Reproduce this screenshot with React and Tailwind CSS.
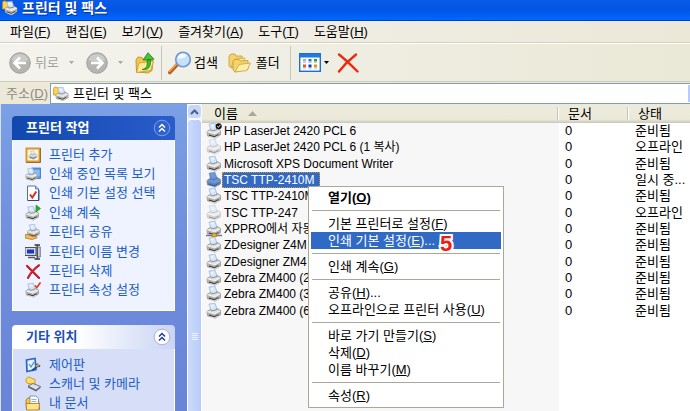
import React, { useState } from 'react';

const menus = [
  ['파일', 'F'],
  ['편집', 'E'],
  ['보기', 'V'],
  ['즐겨찾기', 'A'],
  ['도구', 'T'],
  ['도움말', 'H'],
];

const tasks = [
  { icon: 'add', label: '프린터 추가' },
  { icon: 'queue', label: '인쇄 중인 목록 보기' },
  { icon: 'prefs', label: '인쇄 기본 설정 선택' },
  { icon: 'resume', label: '인쇄 계속' },
  { icon: 'share', label: '프린터 공유' },
  { icon: 'rename', label: '프린터 이름 변경' },
  { icon: 'delete', label: '프린터 삭제' },
  { icon: 'props', label: '프린터 속성 설정' },
];

const places = [
  { icon: 'control', label: '제어판' },
  { icon: 'scanner', label: '스캐너 및 카메라' },
  { icon: 'docs', label: '내 문서' },
];

const printers = [
  { name: 'HP LaserJet 2420 PCL 6', status: '준비됨', kind: 'default' },
  { name: 'HP LaserJet 2420 PCL 6 (1 복사)', status: '오프라인', kind: 'offline' },
  { name: 'Microsoft XPS Document Writer', status: '준비됨' },
  { name: 'TSC TTP-2410M', status: '일시 중...', kind: 'selected' },
  { name: 'TSC TTP-2410M', status: '준비됨' },
  { name: 'TSC TTP-247', status: '오프라인', kind: 'offline' },
  { name: 'XPPRO에서 자동', status: '준비됨', kind: 'network' },
  { name: 'ZDesigner Z4M', status: '준비됨' },
  { name: 'ZDesigner ZM4', status: '준비됨' },
  { name: 'Zebra ZM400 (2', status: '준비됨' },
  { name: 'Zebra ZM400 (3', status: '준비됨' },
  { name: 'Zebra ZM400 (6', status: '준비됨' },
];

const contextMenu = [
  [{ label: '열기', hotkey: 'O', bold: true }],
  [
    { label: '기본 프린터로 설정', hotkey: 'F' },
    { label: '인쇄 기본 설정', hotkey: 'E', more: true, step: 5 },
  ],
  [{ label: '인쇄 계속', hotkey: 'G' }],
  [
    { label: '공유', hotkey: 'H', more: true },
    { label: '오프라인으로 프린터 사용', hotkey: 'U' },
  ],
  [
    { label: '바로 가기 만들기', hotkey: 'S' },
    { label: '삭제', hotkey: 'D' },
    { label: '이름 바꾸기', hotkey: 'M' },
  ],
  [{ label: '속성', hotkey: 'R' }],
];

function PrinterShape() {
  return (
    <>
      <path d="M3 1l6-.8 2.2 6.300L5 8z" fill="#cfe3fb" stroke="#8fa9cf" strokeWidth=".6" />
      <path d="M4.500 2.500l3.500-.5M5 4.200l3.500-.5" stroke="#fff" strokeWidth=".8" />
      <path d="M1 8.500L4.500 6.300l1 1.700 5-1L11 5.500l3.500 2v4.300L9 15.200 1.500 12.800z" fill="#e4e4e0" stroke="#77777a" strokeWidth=".7" />
      <path d="M1.200 8.700l7.600 2.200L14.300 8v3.700L9 15 1.600 12.700z" fill="#b1b1b0" />
      <path d="M1.200 8.700l7.600 2.200L14.300 8" fill="none" stroke="#fafafa" strokeWidth=".8" />
      <path d="M3 12.100l5.500 1.600 4-2.200" fill="none" stroke="#3f3f42" strokeWidth="1.100" />
      <path d="M3.500 13.500l5 1.500 3.500-2" fill="none" stroke="#f4f4f4" strokeWidth=".7" />
    </>
  );
}

function PrinterIcon({ kind }) {
  return (
    <svg viewBox="0 0 16 16" className="h-4 w-4 shrink-0" aria-hidden="true">
      <g opacity={kind === 'offline' ? 0.5 : 1}>
        <PrinterShape />
      </g>
      {kind === 'selected' && (
        <path d="M3 1l6-.8L11 5.500l3.500 2v4.300L9 15.200 1.500 12.800 1 8.500l3-2.200z" fill="#316ac5" opacity=".65" />
      )}
      {kind === 'default' && (
        <>
          <circle cx="12.700" cy="3.200" r="3" fill="#111" />
          <path d="M11.200 3.200l1.200 1.200 2-2.600" fill="none" stroke="#fff" strokeWidth=".9" />
        </>
      )}
      {kind === 'network' && (
        <>
          <path d="M0 14.500h16" stroke="#777" strokeWidth="1.500" />
          <rect x="6" y="12.800" width="4.500" height="3" fill="#f0a81e" stroke="#a06a08" strokeWidth=".5" />
        </>
      )}
    </svg>
  );
}

function FolderPrinterIcon() {
  return (
    <svg viewBox="0 0 16 16" className="h-4 w-4 shrink-0" aria-hidden="true">
      <path d="M.5 2.500l1-1.500h2l1 1H7v7H.500z" fill="#ffd34d" stroke="#c98a12" strokeWidth=".7" />
      <g transform="translate(2 1) scale(.9)">
        <PrinterShape />
      </g>
    </svg>
  );
}

function SideIcon({ name }) {
  return (
    <svg viewBox="0 0 16 16" className="h-4 w-4 shrink-0" aria-hidden="true">
      {name === 'add' && (
        <>
          <rect x="1.500" y="1.500" width="13" height="13" fill="#fff7dc" stroke="#d9992a" strokeWidth="2" />
          <path d="M15.500 1v14.500H1" fill="none" stroke="#7d5a18" strokeWidth=".8" />
          <g transform="translate(3.500 3.500) scale(.58)"><PrinterShape /></g>
        </>
      )}
      {name === 'queue' && (
        <>
          <rect x="7" y="2" width="8.500" height="10.500" fill="#5ba0ee" stroke="#2f63b4" strokeWidth=".7" />
          <path d="M8 5h6.500M8 7h6.500M8 9h6.500" stroke="#d8ebff" strokeWidth=".8" />
          <g transform="translate(0 2) scale(.85)"><PrinterShape /></g>
        </>
      )}
      {name === 'prefs' && (
        <>
          <path d="M2.500 1h8l3 3v11.500h-11z" fill="#fff" stroke="#4a72b5" />
          <path d="M10.500 1v3h3" fill="#9fc0ef" stroke="#4a72b5" strokeWidth=".8" />
          <path d="M5 9.500l2.300 3 4-6" fill="none" stroke="#e02a1c" strokeWidth="2" />
          <path d="M3 15.500h11V5" fill="none" stroke="#26447c" strokeWidth=".9" />
        </>
      )}
      {name === 'resume' && (
        <>
          <g transform="translate(0 1) scale(.93)"><PrinterShape /></g>
          <path d="M11 0l4.500 3.500L11 7z" fill="#2fae2c" stroke="#14751a" strokeWidth=".6" />
        </>
      )}
      {name === 'share' && (
        <>
          <g transform="translate(1.500 0) scale(.88)"><PrinterShape /></g>
          <path d="M0 10.500l3.500.3 4 1.700 4-.2.5 1.500-5 1.700L0 14z" fill="#f5bd54" stroke="#a8691b" strokeWidth=".7" />
        </>
      )}
      {name === 'rename' && (
        <>
          <rect x="0" y="3.500" width="11" height="8" fill="#d7d9e2" stroke="#4c5060" />
          <rect x="2" y="5.500" width="7" height="4" fill="#1838c0" />
          <path d="M3 13.500h7" stroke="#555" strokeWidth="1.500" />
          <path d="M9.500 1h5.500M12.200 1v13.500M9.500 15h5.500" stroke="#333846" strokeWidth="1.300" />
          <path d="M13 3h2.300v10H13" fill="#c6c9d4" stroke="#4c5060" strokeWidth=".7" />
        </>
      )}
      {name === 'delete' && (
        <>
          <path d="M2 3l12 12M14 2.500C9 6 6 9.500 3 15" fill="none" stroke="#7b1020" strokeWidth="1.800" strokeLinecap="round" />
          <path d="M2 2.500l12 12M14 2C9 5.500 6 9 3 14.500" fill="none" stroke="#dc202a" strokeWidth="1.600" strokeLinecap="round" />
        </>
      )}
      {name === 'props' && (
        <>
          <g transform="translate(0 1) scale(.93)"><PrinterShape /></g>
          <path d="M10 3.500l1.800 2L15.500.500" fill="none" stroke="#e3371e" strokeWidth="1.700" />
        </>
      )}
      {name === 'control' && (
        <>
          <path d="M1.500 3l8.500-1.500 1 11-9 2z" fill="#eaf3ff" stroke="#2c66c0" strokeWidth="1.700" />
          <path d="M4 7l2 3 3-5" fill="none" stroke="#4c86d8" strokeWidth="1.200" />
          <path d="M7 13.500l7-5.500M11.500 7l3.500 2.500" stroke="#1e4e9c" strokeWidth="1.800" />
          <path d="M11 9.500l3-2" stroke="#f0a330" strokeWidth="1.800" />
        </>
      )}
      {name === 'scanner' && (
        <>
          <path d="M1 3l2-2 2.500.5L7 2.500l3 1v5L3 7.500 1 6z" fill="#ffdb68" stroke="#bd8a20" strokeWidth=".8" />
          <path d="M3 10l5-2.500 7.500 3-4.500 3.500z" fill="#dfe2ea" stroke="#545a68" strokeWidth=".8" />
          <path d="M3 10v1.500L11 15.500l4.500-3.500v-1.500L11 14z" fill="#606775" />
        </>
      )}
      {name === 'docs' && (
        <>
          <path d="M1 5l2-2h3l1 2h6.500l1 9.500H1.500z" fill="#f9c846" stroke="#a8770f" strokeWidth=".9" />
          <path d="M5 1h6l2.500 2.500V11H5z" fill="#fff" stroke="#6180b5" strokeWidth=".8" />
          <path d="M6.500 4.500h5M6.500 6.500h5" stroke="#7b9cd6" strokeWidth=".8" />
          <path d="M1 8.500h13.500l-.7 6.500H1.600z" fill="#ffe48c" stroke="#a8770f" strokeWidth=".8" />
        </>
      )}
    </svg>
  );
}

function ArrowCircle({ flip }) {
  return (
    <svg viewBox="0 0 22 22" className={flip ? 'h-[22px] w-[22px] -scale-x-100' : 'h-[22px] w-[22px]'} aria-hidden="true">
      <circle cx="11" cy="11" r="10.300" fill="#b5b5b2" stroke="#a2a29e" />
      <path d="M2.500 8a9 9 0 0 1 17 0c-5 2-12 3-17 0z" fill="#cbcbc8" />
      <path d="M17 11H6M11 5.500L5.500 11l5.500 5.500" fill="none" stroke="#fff" strokeWidth="2.600" />
    </svg>
  );
}

function Caret({ color }) {
  return (
    <svg viewBox="0 0 5 3" className="h-[3px] w-[5px]" aria-hidden="true">
      <path d="M0 0h5L2.500 3z" fill={color} />
    </svg>
  );
}

function UpFolderIcon() {
  return (
    <svg viewBox="0 0 20 22" className="h-[22px] w-5" aria-hidden="true">
      <path d="M1 8l2-3 4 .5 1 2 10 1-1 10-4 2.500L1.500 20z" fill="#f5c64c" stroke="#c48d1d" strokeWidth=".9" />
      <path d="M4 11l14.500-2-3 9.500L1.500 20.500z" fill="#ffe896" stroke="#c79a35" strokeWidth=".8" />
      <path d="M7 17.500c5-1 5.500-4 5-9.500H15.500c.5 7-2 10.500-8.500 9.500z" fill="#3dba2d" stroke="#1b7f18" strokeWidth=".7" />
      <path d="M8 8l5-7.300L19 7.200z" fill="#47c435" stroke="#1b7f18" strokeWidth=".8" />
    </svg>
  );
}

function SearchIcon() {
  return (
    <svg viewBox="0 0 24 24" className="h-6 w-6" aria-hidden="true">
      <path d="M1.800 21.500l7.500-8" stroke="#b45f1e" strokeWidth="3.600" strokeLinecap="round" />
      <path d="M1.500 20.500l7-7.500" stroke="#f1a458" strokeWidth="1.500" strokeLinecap="round" />
      <circle cx="15" cy="8.500" r="7.300" fill="#c4e2fc" stroke="#7494cf" strokeWidth="1.600" />
      <path d="M9.500 8a5.500 5.500 0 0 1 9-4c-1 3.500-5 3-9 4z" fill="#f4fbff" />
    </svg>
  );
}

function FoldersIcon() {
  return (
    <svg viewBox="0 0 24 20" className="h-5 w-6" aria-hidden="true">
      <path d="M1 3l2-2h4l1 2h6v10L3 15 1 13z" fill="#f6d26a" stroke="#c29a35" strokeWidth=".8" />
      <path d="M3 14L7 6l10-1-3 8z" fill="#ffedab" stroke="#c9a13e" strokeWidth=".8" />
      <path d="M5 8l2-1.500h4l1 1.500 8-.5V16L7 19l-2-2z" fill="#f6d26a" stroke="#c29a35" strokeWidth=".8" />
      <path d="M7 19l4-7.500L22.500 10 19 17.500z" fill="#ffeeaa" stroke="#c9a13e" strokeWidth=".8" />
    </svg>
  );
}

function ViewsIcon() {
  return (
    <svg viewBox="0 0 22 19" className="h-[19px] w-[22px]" aria-hidden="true">
      <rect x=".7" y=".7" width="20.600" height="17.600" fill="#fff" stroke="#1c70d2" strokeWidth="1.400" />
      <rect x="1" y="1" width="20" height="3.500" fill="#1f7ae0" />
      <rect x="4" y="6" width="3" height="2.500" fill="#a5a9dc" />
      <rect x="9.500" y="6" width="3" height="2.500" fill="#2f72dd" />
      <rect x="15" y="6" width="3" height="2.500" fill="#28a02c" />
      <rect x="4" y="11.500" width="3" height="3" fill="#e8532b" />
      <rect x="9.500" y="11.500" width="3" height="3" fill="#173eab" />
      <rect x="15" y="11.500" width="3" height="3" fill="#d29b1b" />
      <path d="M4 9.500h3M9.500 9.500h3M15 9.500h3M4 15.800h3M9.500 15.800h3M15 15.800h3" stroke="#b9bcc8" strokeWidth=".8" />
    </svg>
  );
}

function RedCross() {
  return (
    <svg viewBox="0 0 22 20" className="h-5 w-[22px]" aria-hidden="true">
      <path d="M2 1.500C8 6 14 12 20.500 18.500M19 1.500C12 7 7 12 2 18.500" fill="none" stroke="#ee2811" strokeWidth="2.400" strokeLinecap="round" />
    </svg>
  );
}

function Hotkey({ char }) {
  return <>(<span className="underline underline-offset-1">{char}</span>)</>;
}

function SidePanel({ title, items, primary }) {
  return (
    <section>
      <h2
        className={
          primary
            ? 'flex h-6 items-center justify-between rounded-t bg-linear-to-r from-[#1048ad] to-[#2a5ccb] pr-1 pl-[14px] text-[13px] font-bold text-white'
            : 'flex h-6 items-center justify-between rounded-t bg-linear-to-r from-white from-40% to-[#c9d4f4] pr-1 pl-[14px] text-[13px] font-bold text-[#1c50b8]'
        }
      >
        {title}
        <button type="button" aria-label={title + ' 접기'}>
          <svg viewBox="0 0 18 18" className="h-[18px] w-[18px]" aria-hidden="true">
            <circle cx="9" cy="9" r="7.800" fill={primary ? '#2f62cf' : '#fff'} stroke={primary ? '#7f9fe4' : '#a9b4d3'} />
            <path d="M6 8.500l3-3 3 3M6 12.500l3-3 3 3" fill="none" stroke={primary ? '#fff' : '#1c3f94'} strokeWidth="1.500" />
          </svg>
        </button>
      </h2>
      <ul
        className={
          primary
            ? 'flex min-h-[171px] flex-col justify-between border border-t-0 border-white bg-[#eff3ff] pt-[5px] pb-2.5 pl-3'
            : 'flex flex-col border border-t-0 border-white bg-[#d6dff7] py-1.5 pl-3'
        }
      >
        {items.map((item) => (
          <li key={item.label}>
            <a href="#" className="flex h-[19px] items-center gap-2 whitespace-nowrap text-[#215dc6]">
              <SideIcon name={item.icon} />
              {item.label}
            </a>
          </li>
        ))}
      </ul>
    </section>
  );
}

function ContextMenu() {
  return (
    <div role="menu" className="absolute top-[186px] left-[308px] w-[196px] border border-[#aca899] bg-white px-0.5 pt-0.5 pb-[3px]">
      {contextMenu.map((group, i) => (
        <div key={i}>
          {i > 0 && <hr className="mx-px my-1 border-t border-[#aca899]" />}
          {group.map((item) => (
            <button
              key={item.label}
              type="button"
              role="menuitem"
              className={
                item.step
                  ? 'relative flex h-[17px] w-full items-center bg-[#316ac5] pl-[17px] whitespace-nowrap text-white'
                  : item.bold
                    ? 'flex h-[17px] w-full items-center pl-[17px] font-bold whitespace-nowrap'
                    : 'flex h-[17px] w-full items-center pl-[17px] whitespace-nowrap'
              }
            >
              <span>
                {item.label}
                <Hotkey char={item.hotkey} />
                {item.more && '...'}
              </span>
              {item.step && (
                <span className="absolute top-0 left-[129px] text-[22px] leading-6 font-bold text-[#f01c10] [-webkit-text-stroke:4px_white] [paint-order:stroke_fill]">
                  {item.step}
                </span>
              )}
            </button>
          ))}
        </div>
      ))}
    </div>
  );
}

function App() {
  const [address, setAddress] = useState('프린터 및 팩스');

  return (
    <div className="relative flex h-screen flex-col overflow-hidden bg-[#ece9d8] font-['Liberation_Sans','Noto_Sans_CJK_KR',sans-serif] text-[13px] leading-4 text-black">
      <header className="flex h-[21px] shrink-0 items-center gap-1 border-b border-[#003dd0] bg-linear-to-b from-[#0a5ae6] via-[#0056e4] to-[#0068ff] pb-1 pl-0.5">
        <FolderPrinterIcon />
        <h1 className="text-sm leading-4 font-bold text-white [text-shadow:1px_1px_0_#0b2f8f]">프린터 및 팩스</h1>
      </header>

      <nav className="flex h-[22px] shrink-0 items-center gap-[15px] border-b border-[#d5d1bf] bg-linear-to-r from-[#f3f2ed] to-[#ebe8d8] pl-[10px]">
        {menus.map(([label, key]) => (
          <button key={key} type="button" className="whitespace-nowrap">
            {label}
            <Hotkey char={key} />
          </button>
        ))}
      </nav>

      <div className="flex h-[39px] shrink-0 items-center border-t border-b border-t-white border-b-[#d0ccba] bg-linear-to-r from-[#f4f3ee] to-[#eae8d6] pl-[9px]">
        <button type="button" className="flex items-center gap-1 text-[#a5a397]">
          <ArrowCircle />
          뒤로
        </button>
        <button type="button" aria-label="뒤로 목록" className="ml-2.5"><Caret color="#aca899" /></button>
        <button type="button" aria-label="앞으로" className="ml-3"><ArrowCircle flip /></button>
        <button type="button" aria-label="앞으로 목록" className="ml-2.5"><Caret color="#aca899" /></button>
        <button type="button" aria-label="위로" className="ml-3"><UpFolderIcon /></button>
        <div className="ml-1.5 h-[34px] w-px bg-[#cac6b4]" />
        <button type="button" className="ml-1.5 flex items-center gap-0.5"><SearchIcon />검색</button>
        <button type="button" className="ml-2.5 flex items-center gap-1"><FoldersIcon />폴더</button>
        <div className="ml-2.5 h-[34px] w-px bg-[#cac6b4]" />
        <button type="button" aria-label="보기 형식" className="ml-2 flex items-center gap-[3px]">
          <ViewsIcon />
          <Caret color="#000" />
        </button>
        <button type="button" aria-label="삭제" className="ml-2"><RedCross /></button>
      </div>

      <div className="flex h-[22px] shrink-0 items-center pt-px">
        <label htmlFor="address" className="w-[50px] shrink-0 pl-1.5 text-[#8c8a7f]">
          주소<Hotkey char="D" />
        </label>
        <div className="flex h-[21px] min-w-0 grow items-center gap-1 border border-r-0 border-[#7f9db9] bg-white pl-0.5">
          <FolderPrinterIcon />
          <input
            id="address"
            value={address}
            onChange={(e) => setAddress(e.target.value)}
            className="min-w-0 grow bg-transparent outline-none"
          />
          <button type="button" aria-label="주소 목록" className="h-[17px] w-0.5 bg-[#b9cbf6]" />
        </div>
      </div>

      <div className="flex min-h-0 grow">
        <aside className="flex w-[187px] shrink-0 flex-col gap-[14px] overflow-hidden border-l border-[#d6dff7] bg-linear-to-b from-[#7ba0e5] via-[#6e8cdc] to-[#6a84d8] pt-3 pr-3 pl-[11px]">
          <SidePanel title="프린터 작업" items={tasks} primary />
          <SidePanel title="기타 위치" items={places} />
        </aside>

        <div className="flex w-[15px] shrink-0 flex-col bg-[#f0f3fd]">
          <button type="button" aria-label="위로 스크롤" className="flex h-[15px] shrink-0 items-center justify-center rounded-sm border border-white bg-[#c6d5fc]">
            <svg viewBox="0 0 9 6" className="h-1.5 w-[9px]" aria-hidden="true">
              <path d="M1 5l3.500-3.500L8 5" fill="none" stroke="#4d6185" strokeWidth="2" />
            </svg>
          </button>
          <div className="flex grow flex-col items-center rounded-t-sm border border-b-0 border-white bg-linear-to-r from-[#cbdafe] to-[#b9ccf8] pt-[213px]">
            <div className="h-px w-1.5 bg-[#eef4fe]" />
            <div className="mt-px h-px w-1.5 bg-[#eef4fe]" />
            <div className="mt-px h-px w-1.5 bg-[#eef4fe]" />
            <div className="mt-px h-px w-1.5 bg-[#eef4fe]" />
          </div>
        </div>

        <main className="min-w-0 grow bg-[linear-gradient(to_right,#f7f7f7_357px,white_357px)]">
          <table className="h-[215px] w-full table-fixed border-collapse">
            <colgroup>
              <col className="w-[357px]" />
              <col className="w-[70px]" />
              <col />
            </colgroup>
            <thead>
              <tr className="h-[19px] bg-linear-to-b from-[#ebeadb] from-80% to-[#cbc7b8] text-left">
                <th className="p-0 pl-3 font-normal">
                  <span className="flex items-center justify-between">
                    <span className="flex items-center gap-[10px]">
                      이름
                      <svg viewBox="0 0 9 5" className="h-[5px] w-[9px]" aria-hidden="true">
                        <path d="M0 5L4.500 0 9 5z" fill="#aca899" />
                      </svg>
                    </span>
                    <span className="h-[13px] w-0.5 border-r border-l border-r-white border-l-[#c7c5b2]" />
                  </span>
                </th>
                <th className="p-0 pl-[9px] font-normal">
                  <span className="flex items-center justify-between">
                    문서
                    <span className="h-[13px] w-0.5 border-r border-l border-r-white border-l-[#c7c5b2]" />
                  </span>
                </th>
                <th className="p-0 pl-[9px] font-normal">상태</th>
              </tr>
            </thead>
            <tbody>
              {printers.map((printer, i) => (
                <tr key={i}>
                  <td className="p-0 pl-1">
                    <span className="flex items-center text-xs leading-4 whitespace-nowrap">
                      <PrinterIcon kind={printer.kind} />
                      <span className={printer.kind === 'selected' ? 'bg-[#316ac5] pr-1.5 pl-0.5 text-white outline-1 -outline-offset-1 outline-dotted outline-[#ce953a]' : 'pl-0.5'}>
                        {printer.name}
                      </span>
                    </span>
                  </td>
                  <td className="p-0 pl-1.5">0</td>
                  <td className="p-0 pl-1.5 whitespace-nowrap">{printer.status}</td>
                </tr>
              ))}
            </tbody>
          </table>
        </main>
      </div>

      <ContextMenu />
    </div>
  );
}

export default App;
